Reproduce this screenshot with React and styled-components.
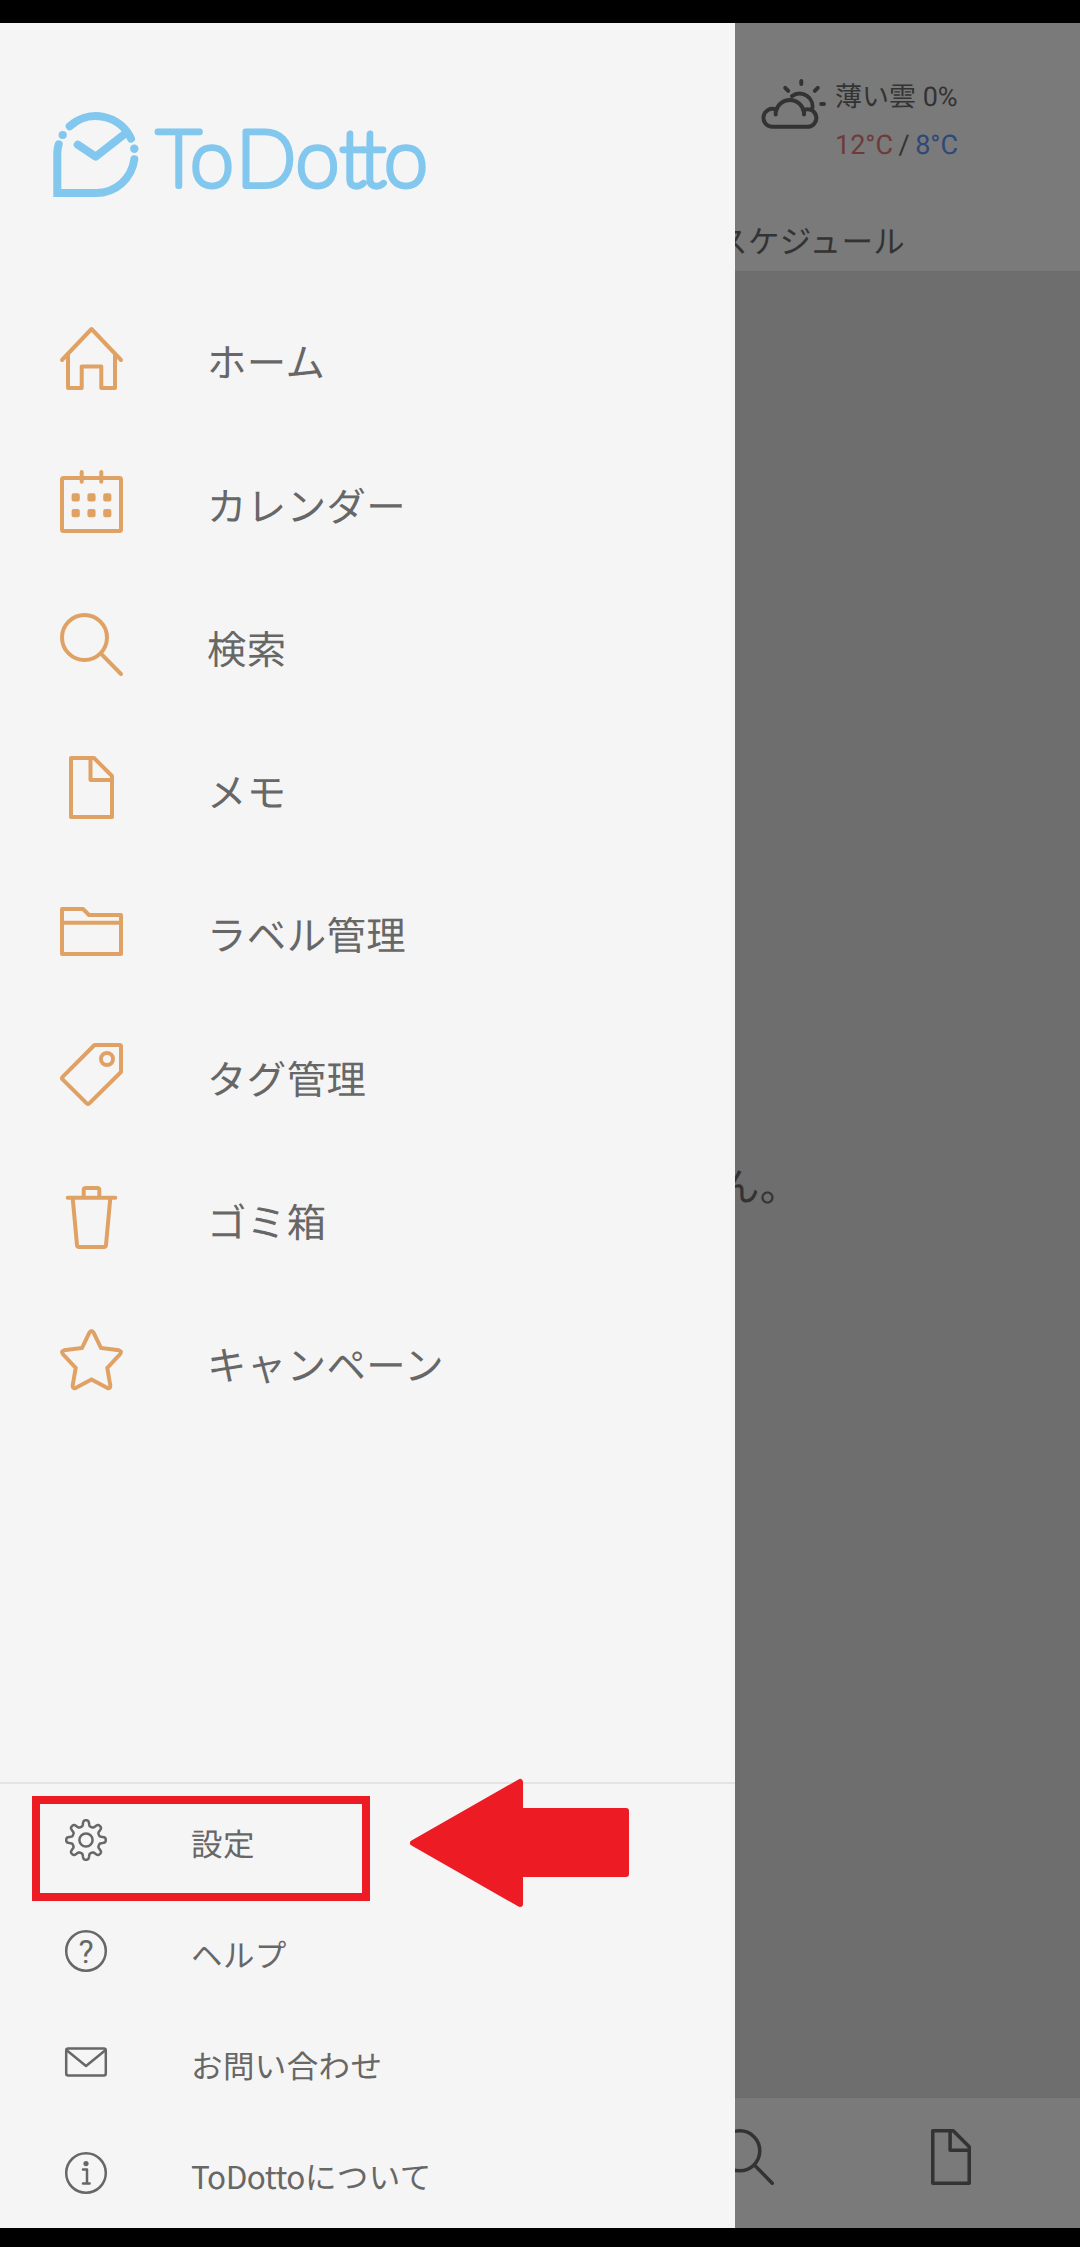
import React from 'react';
import styled, { createGlobalStyle } from 'styled-components';

const GlobalStyle = createGlobalStyle`
  body {
    margin: 0;
    background: #000;
    text-rendering: geometricPrecision;
  }
  * {
    box-sizing: border-box;
  }
`;

const jp = `'Noto Sans CJK JP', sans-serif`;

const Phone = styled.div`
  position: relative;
  width: 1080px;
  height: 2247px;
  padding: 23px 0 19px;
  background: #000;
  overflow: hidden;
  font-family: ${jp};
  color: #676767;
`;

const Screen = styled.main`
  display: flex;
  flex-direction: column;
  height: 2205px;
  background: #dcdcdc;
`;

const TopPanel = styled.header`
  height: 249px;
  padding: 54px 0 0 762px;
  display: flex;
  flex-direction: column;
  background: #f5f5f5;
  border-bottom: 1px solid #d8d8d8;
`;

const Weather = styled.div`
  display: flex;
  height: 124px;
  gap: 8px;
`;

const WeatherLines = styled.div`
  display: flex;
  flex-direction: column;
  margin-top: -3px;
  font: 27px/47.5px Roboto, ${jp};
  white-space: pre;
`;

const Temps = styled.span`
  word-spacing: -1.2px;
`;

const Temp = styled.span`
  color: ${(p) => p.$color};
`;

const ScheduleTitle = styled.div`
  margin: 16px 0 0 -46px;
  font-size: 31.5px;
  line-height: 46px;
  letter-spacing: 0.4px;
`;

const Empty = styled.section`
  flex: 1;
  display: flex;
  align-items: center;
  padding-left: 720px;
  font-size: 39.4px;
  line-height: 56px;
  letter-spacing: 0.45px;
`;

const TabBar = styled.nav`
  height: 131px;
  padding-right: 26px;
  display: flex;
  justify-content: flex-end;
  background: #f5f5f5;
  border-top: 1px solid #d8d8d8;
`;

const Tab = styled.div`
  width: 205.5px;
  display: flex;
  justify-content: center;
  padding-top: 31px;
`;

const Scrim = styled.div`
  position: absolute;
  inset: 23px 0 19px;
  background: rgba(0, 0, 0, 0.5);
`;

const Drawer = styled.aside`
  position: absolute;
  left: 0;
  top: 23px;
  width: 735px;
  height: 2205px;
  display: flex;
  flex-direction: column;
  background: #f5f5f5;
`;

const Brand = styled.div`
  height: 263.5px;
  padding: 87px 0 0 50px;
`;

const MainList = styled.ul`
  flex: 1;
  margin: 0;
  padding: 0;
  list-style: none;
`;

const MainItem = styled.li`
  display: flex;
  align-items: center;
  height: 143.28px;
  padding-left: 60px;
  gap: 84px;
`;

const MainLabel = styled.span`
  font-size: 39.4px;
  line-height: 56px;
  padding-top: 6.6px;
  letter-spacing: 0.45px;
`;

const SubList = styled.ul`
  height: 446px;
  margin: 0;
  padding: 0;
  list-style: none;
  border-top: 2px solid #e4e4e4;
`;

const SubItem = styled.li`
  display: flex;
  align-items: center;
  height: 111px;
  padding-left: 65px;
  gap: 84px;
`;

const SubLabel = styled.span`
  font-size: 31.5px;
  line-height: 46px;
  padding-top: 6.6px;
  letter-spacing: 0.4px;
`;

const Latin = styled.span`
  letter-spacing: -0.5px;
`;

const Glyph = styled.svg`
  display: block;
  flex: none;
  overflow: visible;
  fill: none;
  stroke: ${(p) => p.$color || '#676767'};
  stroke-width: ${(p) => p.$weight || 4};
  stroke-linecap: round;
  stroke-linejoin: round;
`;

const Highlight = styled.div`
  position: absolute;
  left: 32px;
  top: 1796px;
  width: 338px;
  height: 105px;
  border: 8px solid #ed1c24;
`;

const Pointer = styled.svg`
  position: absolute;
  left: 410px;
  top: 1778px;
  fill: #ed1c24;
  stroke: #ed1c24;
  stroke-width: 6;
  stroke-linejoin: round;
`;

const LineIcon = ({ size = 63, color = '#e0a264', children }) => (
  <Glyph $color={color} width={size} height={size} viewBox="0 0 63 63">{children}</Glyph>
);

const SubIcon = ({ children }) => (
  <Glyph $weight={2.5} width="42" height="42" viewBox="0 0 42 42">{children}</Glyph>
);

const searchShape = (
  <>
    <circle cx="24.5" cy="24.5" r="22.5" />
    <path d="M41.2 40.8 61 61" />
  </>
);

const fileShape = <path d="M11 2H34L52 20V61H11ZM30.5 2V24H52" />;

const mainItems = [
  ['ホーム', <path d="M2 33 31.5 2 61 33M8 28V61H21.7V39.6H41.3V61H55V28" />],
  ['カレンダー', (
    <>
      <rect x="2" y="8" width="59" height="53" rx="1.5" />
      <path d="M21.7 2V11.7M41.3 2V11.7" />
      {[27.4, 43.2].map((y) =>
        [15.7, 31.5, 47.3].map((x) => (
          <rect key={`${x}-${y}`} x={x - 2.5} y={y - 2.5} width="5" height="5" rx="0.5" fill="#e0a264" strokeWidth="3.2" />
        ))
      )}
    </>
  )],
  ['検索', searchShape],
  ['メモ', fileShape],
  ['ラベル管理', <path d="M2 9H23L29 15H61V54H2ZM2 22.7H61" />],
  ['タグ管理', (
    <>
      <path d="M34.5 2H59.5Q61 2 61 3.5V29L29.3 60.3Q28 61.5 26.7 60.3L2.6 36.3Q1.4 35 2.6 33.8Z" />
      <circle cx="47" cy="16" r="6" />
    </>
  )],
  ['ゴミ箱', <path d="M7.7 11.8H55.3M23.7 11.5V4Q23.7 2 25.7 2H37.3Q39.3 2 39.3 4V11.5M12.7 12 17 59Q17.2 61 19 61H44Q45.8 61 46 59L50.3 12" />],
  ['キャンペーン', <path strokeLinejoin="miter" d="M22 19 29.3 3.8Q31.5 .2 33.7 3.8L41 19 59 21.3Q62.5 22.3 60 25.3L47.3 39 50.3 56.5Q50.5 60.3 47 58.8L31.5 50.6 16 58.8Q12.5 60.3 12.7 56.5L15.7 39 3 25.3Q.5 22.3 4 21.3Z" />],
];

const gearPath = Array.from({ length: 240 }, (_, i) => {
  const a = (i / 240) * Math.PI * 2;
  const r = 16.9 + 2.9 * Math.tanh(2 * (Math.cos(8 * a) - 0.12)) / Math.tanh(2);
  return `${i ? 'L' : 'M'}${(21 + r * Math.cos(a)).toFixed(2)} ${(21 + r * Math.sin(a)).toFixed(2)}`;
}).join('') + 'Z';

const IconMark = styled.text`
  font: 32px Roboto, sans-serif;
  text-anchor: middle;
  fill: #676767;
  stroke: none;
`;

const subItems = [
  ['設定', '', (
    <>
      <path d={gearPath} />
      <circle cx="21" cy="21" r="6.6" />
    </>
  )],
  ['ヘルプ', '', (
    <>
      <circle cx="21" cy="21" r="19.8" />
      <IconMark x="21" y="32.5">?</IconMark>
    </>
  )],
  ['お問い合わせ', '', (
    <>
      <rect x="1.2" y="7.5" width="39.6" height="27" rx="2" />
      <path d="M2 9.5 21 25 40 9.5" />
    </>
  )],
  ['について', 'ToDotto', (
    <>
      <circle cx="21" cy="21" r="19.8" />
      <circle cx="21" cy="11.6" r="2.6" fill="#676767" stroke="none" />
      <path d="M18 17.6H22V31.4M18 31.4H24.6" />
    </>
  )],
];

const Wordmark = styled.text`
  font: 100 78px Lato, sans-serif;
  fill: #82c7ee;
  stroke-width: 6;
`;

const Logo = () => (
  <Glyph $color="#82c7ee" $weight={8} width="385" height="90" viewBox="0 0 385 90">
    <path d="M19.7 16.3A38.6 38.6 0 0 1 81 28.7" />
    <path d="M27.7 34.7 45.7 46.7 76.7 22.3" />
    <path strokeLinejoin="miter" d="M8.7 34.3Q7.3 38.5 7.3 43V83H46A38.6 38.6 0 0 0 84.3 49.3" />
    <circle cx="12.7" cy="25" r="4.1" fill="#82c7ee" stroke="none" />
    <circle cx="84.3" cy="38.7" r="4.2" fill="#82c7ee" stroke="none" />
    <Wordmark x="106.5 140.5 186.5 246 290 310 334.5" y="76">ToDotto</Wordmark>
  </Glyph>
);

const CloudSun = () => (
  <Glyph width="65" height="50" viewBox="0 0 65 50">
    <path d="M13.7 37.5V35.3A14.3 14.3 0 0 1 42 35.3V37.5" />
    <path d="M13.7 32.4A9 9 0 1 0 10.7 49.8H45A8.8 8.8 0 1 0 43 32.6" />
    <path d="M30 19.2A12.8 12.8 0 0 1 50 33" />
    <path d="M39.3 4V7M23.2 10.8 26.2 13.8M55.8 10.8 52.8 13.8M59.2 27H62" />
  </Glyph>
);

export default function App() {
  return (
    <Phone>
      <GlobalStyle />
      <Screen>
        <TopPanel>
          <Weather>
            <CloudSun />
            <WeatherLines>
              <span>薄い雲 0%</span>
              <Temps><Temp $color="#dc7676">12°C</Temp> / <Temp $color="#5c92ee">8°C</Temp></Temps>
            </WeatherLines>
          </Weather>
          <ScheduleTitle>スケジュール</ScheduleTitle>
        </TopPanel>
        <Empty>ん。</Empty>
        <TabBar>
          <Tab><LineIcon size={56} color="#676767">{searchShape}</LineIcon></Tab>
          <Tab><LineIcon size={56} color="#676767">{fileShape}</LineIcon></Tab>
        </TabBar>
      </Screen>
      <Scrim />
      <Drawer>
        <Brand><Logo /></Brand>
        <MainList>
          {mainItems.map(([label, shape]) => (
            <MainItem key={label}>
              <LineIcon>{shape}</LineIcon>
              <MainLabel>{label}</MainLabel>
            </MainItem>
          ))}
        </MainList>
        <SubList>
          {subItems.map(([label, latin, shape]) => (
            <SubItem key={label}>
              <SubIcon>{shape}</SubIcon>
              <SubLabel>{latin && <Latin>{latin}</Latin>}{label}</SubLabel>
            </SubItem>
          ))}
        </SubList>
      </Drawer>
      <Highlight />
      <Pointer width="219" height="130" viewBox="0 0 219 130">
        <path d="M3 65 110 4V33H216V96H110V126Z" />
      </Pointer>
    </Phone>
  );
}
